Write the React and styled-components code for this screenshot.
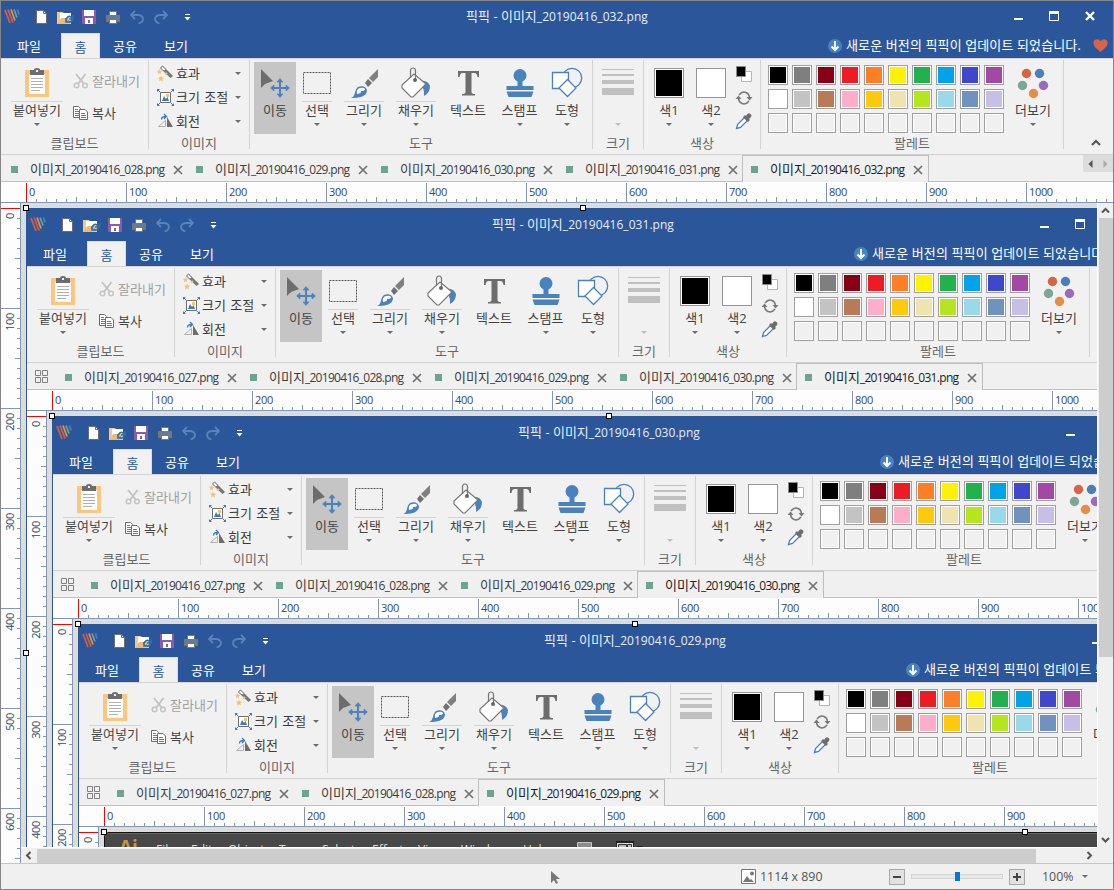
import React from 'react';
import styled, { createGlobalStyle } from 'styled-components';

const UI = `'Open Sans', 'Noto Sans CJK KR', sans-serif`;
const LINE = '#8497b0';

const Global = createGlobalStyle`
  * { box-sizing: border-box; }
  body { margin: 0; background: #f0f0f0; overflow: hidden; }
`;

const Frame = styled.div`
  width: 1114px;
  height: 890px;
  flex: none;
  display: flex;
  flex-direction: column;
  overflow: hidden;
  background: #f1f1f1;
  border: 1px solid ${(p) => (p.$root ? '#858585' : '#2b579a')};
  font: 13px/18px ${UI};
  color: #3b3b3b;
  white-space: nowrap;
`;

const TitleBar = styled.header`
  height: 32px;
  flex: none;
  display: flex;
  background: #2b579a;
`;
const QuickTools = styled.div`
  width: 300px;
  height: 32px;
  svg { display: block; }
`;
const Title = styled.div`
  flex: 1;
  text-align: center;
  line-height: 31px;
  color: #e8edf5;
`;
const Latin = styled.span`
  font-size: 12px;
  letter-spacing: ${(p) => p.$spacing || '0'};
`;
const WindowButtons = styled.div`
  width: 300px;
  display: flex;
  justify-content: flex-end;
`;

const MenuBar = styled.nav`
  height: 25px;
  flex: none;
  display: flex;
  padding-left: 2px;
  background: #2b579a;
`;
const MenuItem = styled.div`
  width: ${(p) => p.$w}px;
  margin-right: ${(p) => p.$gap || 0}px;
  text-align: center;
  line-height: 26px;
  color: ${(p) => (p.$active ? '#2b579a' : '#fff')};
  background: ${(p) => (p.$active ? '#f1f1f1' : 'transparent')};
  border: ${(p) => (p.$active ? '1px solid #dcdcdc' : '0')};
  border-bottom: 0;
`;
const Notice = styled.div`
  flex: 1;
  display: flex;
  align-items: center;
  justify-content: flex-end;
  padding-right: 5px;
  line-height: 20px;
  color: #fff;
  span { width: 235px; margin: 0 12px 2px 4px; letter-spacing: 0.12px; }
`;

const Ribbon = styled.div`
  height: 97px;
  flex: none;
  display: flex;
  padding-top: 1px;
  border-top: 1px solid #d4d4d4;
  border-bottom: 1px solid #d0d0d0;
`;
const Group = styled.section`
  width: ${(p) => p.$w}px;
  height: 89px;
  flex: none;
  display: flex;
  flex-direction: column;
  border-right: 1px solid #d2d2d2;
`;
const GroupBody = styled.div`
  height: 74px;
  flex: none;
  display: flex;
  padding-left: ${(p) => p.$pad || 0}px;
`;
const GroupLabel = styled.div`
  text-align: center;
  line-height: 19px;
  color: #666;
`;
const BigButton = styled.div`
  width: ${(p) => p.$w}px;
  height: 72px;
  flex: none;
  margin: 2px ${(p) => p.$gap || 0}px 0 0;
  display: flex;
  flex-direction: column;
  align-items: center;
  background: ${(p) => (p.$active ? '#c5c5c5' : 'transparent')};
  color: #444;
  > svg { flex: none; display: block; }
`;
const Caption = styled.div`
  width: ${(p) => p.$line || 0}px;
  height: 20px;
  line-height: 17px;
  display: flex;
  justify-content: center;
  border-top: 1px solid ${(p) => (p.$line ? '#d4d4d4' : 'transparent')};
`;
const Arrow = styled.i`
  width: 0;
  height: 0;
  margin-top: ${(p) => p.$top || 0}px;
  border: 3px solid transparent;
  border-top-color: ${(p) => p.$color || '#6d6d6d'};
  border-bottom: 0;
`;
const SideButtons = styled.div`
  display: flex;
  flex-direction: column;
  padding: 5px 0 0 10px;
`;
const SideButton = styled.div`
  height: 32px;
  display: flex;
  align-items: center;
  gap: 3px;
  color: ${(p) => (p.$off ? '#a0a0a0' : '#444')};
`;
const RowList = styled.div`
  flex: 1;
  padding-top: 1px;
`;
const RowButton = styled.div`
  height: 24px;
  display: flex;
  align-items: center;
  padding: 0 8px;
  svg { margin-right: 2px; }
  span { flex: 1; word-spacing: 1px; }
`;
const Stripes = styled.div`
  width: 32px;
  height: 39px;
  padding-top: 7px;
  div { background: #c0c0c0; margin-bottom: 4px; }
`;
const Chip = styled.div`
  width: 30px;
  height: 30px;
  margin: 6px 0 3px;
  border: 1px solid #969696;
  outline: 1px solid #fff;
  outline-offset: -2px;
  background: ${(p) => p.$color};
`;
const Palette = styled.div`
  width: 236px;
  height: 68px;
  display: grid;
  grid-template-columns: repeat(10, 20px);
  grid-auto-rows: 20px;
  gap: 4px;
  margin-top: 5px;
`;
const Swatch = styled.div`
  border: 1px solid #a0a0a0;
  background-color: ${(p) => p.$color};
  box-shadow: inset 0 0 0 1px #fff;
`;
const RibbonEnd = styled.div`
  flex: 1;
  display: flex;
  align-items: flex-end;
  justify-content: flex-end;
  padding: 0 12px 7px 0;
`;

const DocTabs = styled.div`
  height: 27px;
  flex: none;
  display: flex;
  padding-left: 1px;
  background: linear-gradient(#c0c0c0, #c0c0c0) bottom / 100% 1px no-repeat #f0f0f0;
`;
const GridButton = styled.div`
  width: 28px;
  padding: 7px 0 0 7px;
  svg { display: block; }
`;
const DocTab = styled.div`
  width: ${(p) => (p.$active ? 187 : 185)}px;
  flex: none;
  display: flex;
  align-items: center;
  color: ${(p) => (p.$active ? '#1c1c1c' : '#3c3c3c')};
  background: ${(p) => (p.$active ? '#f0f0f0' : 'transparent')};
  border: solid #bdbdbd;
  border-width: ${(p) => (p.$active ? '1px 1px 0 1px' : '0')};
  padding: ${(p) => (p.$active ? '1px 0 0 8px' : '2px 0 0 9px')};
`;
const DocName = styled.span`
  width: 136px;
  margin: 0 7px 0 12px;
`;
const Square = styled.i`
  width: 7px;
  height: 7px;
  flex: none;
  background: #69a592;
`;
const TabScroll = styled.div`
  width: 30px;
  height: 17px;
  margin-left: auto;
  background: #dcdcdc;
  display: flex;
  align-items: center;
  justify-content: space-around;
`;

const RulerTop = styled.div`
  height: 21px;
  flex: none;
  display: flex;
  padding: 1px 0 0 25px;
  border-bottom: 1px solid ${LINE};
  background: #fdfdfd;
  overflow: hidden;
`;
const TopMark = styled.div`
  width: 100px;
  flex: none;
  border-left: 1px solid ${(p) => (p.$zero ? '#f00' : LINE)};
  padding-left: 2px;
  font-size: 11px;
  line-height: 18px;
  letter-spacing: -0.35px;
  color: #2f4a6b;
  background:
    linear-gradient(${LINE}, ${LINE}) 49px 100% / 1px 5px no-repeat,
    repeating-linear-gradient(90deg, transparent 0 9px, ${LINE} 9px 10px) 0 100% / 99px 3px no-repeat;
`;
const Middle = styled.div`
  flex: 1;
  min-height: 0;
  display: flex;
`;
const RulerLeft = styled.div`
  width: 20px;
  flex: none;
  padding-top: 5px;
  border-right: 1px solid ${LINE};
  background: #fdfdfd;
  overflow: hidden;
`;
const LeftMark = styled.div`
  height: 100px;
  display: flex;
  align-items: flex-start;
  border-top: 1px solid ${(p) => (p.$zero ? '#f00' : LINE)};
  background:
    linear-gradient(${LINE}, ${LINE}) 100% 49px / 5px 1px no-repeat,
    repeating-linear-gradient(180deg, transparent 0 9px, ${LINE} 9px 10px) 100% 0 / 3px 99px no-repeat;
  span {
    writing-mode: vertical-rl;
    transform: rotate(180deg);
    font-size: 11px;
    line-height: 16px;
    letter-spacing: -0.35px;
    color: #2f4a6b;
    margin: 4px 0 0 1px;
  }
`;
const Canvas = styled.div`
  flex: 1;
  min-width: 0;
  display: grid;
  grid-template-columns: 1fr 16px;
  grid-template-rows: 1fr 16px;
`;
const Viewport = styled.div`
  position: relative;
  overflow: hidden;
  background: #dcdcdc;
  padding: 5px 0 0 5px;
`;
const Handle = styled.i`
  position: absolute;
  left: ${(p) => p.$x + 3}px;
  top: ${(p) => p.$y + 3}px;
  width: 6px;
  height: 6px;
  border: 1px solid #000;
  background: #fff;
`;
const VScroll = styled.div`
  display: flex;
  flex-direction: column;
  align-items: center;
  justify-content: space-between;
  border-left: 1px solid #fff;
  background: #f0f0f0;
  svg { flex: none; display: block; }
`;
const HScroll = styled.div`
  display: flex;
  align-items: center;
  border-top: 1px solid #fff;
  background: #f0f0f0;
  svg { flex: none; display: block; }
`;
const Track = styled.div`
  flex: 1;
  padding-left: ${(p) => p.$pad || 0}px;
`;
const Thumb = styled.div`
  background: #cdcdcd;
  width: ${(p) => p.$w}px;
  height: ${(p) => p.$h}px;
`;
const Corner = styled.div`
  background: #f0f0f0;
`;

const Status = styled.footer`
  height: 26px;
  flex: none;
  display: flex;
  align-items: center;
  border-top: 1px solid #c6c6c6;
  background: #f0f0f0;
  color: #555;
  font-size: 12.4px;
  > svg { flex: none; }
`;
const StatusText = styled.div`
  width: ${(p) => p.$w}px;
  flex: none;
  padding-left: ${(p) => p.$pad}px;
`;
const ZoomButton = styled.div`
  width: 16px;
  height: 16px;
  flex: none;
  border: 1px solid #a8a8a8;
  background: #e2e2e2;
  display: flex;
  align-items: center;
  justify-content: center;
`;
const Slider = styled.div`
  width: 92px;
  height: 5px;
  margin: 0 6px;
  flex: none;
  border: 1px solid #d4d4d4;
  background: #e5e9e9;
  display: flex;
  align-items: center;
  justify-content: center;
  i { width: 5px; height: 9px; background: #0078d7; flex: none; }
`;

const AppBar = styled.div`
  width: 1840px;
  height: 200px;
  display: flex;
  align-items: flex-start;
  padding-left: 14px;
  border: 1px solid #111;
  border-radius: 5px 0 0 0;
  box-shadow: inset 0 1px 0 #666;
  background: #484848;
  color: #ddd;
  font: 12px/17px ${UI};
  white-space: nowrap;
  > svg { flex: none; margin-top: 8px; }
`;
const AppLogo = styled.b`
  width: 17px;
  margin: 1px 20px 0 0;
  font: bold 19px/26px ${UI};
  color: #c9953f;
`;
const AppMenu = styled.span`
  width: ${(p) => p.$w}px;
  flex: none;
  margin-top: 8px;
`;

const CloseX = () => (
  <svg width="10" height="10" viewBox="0 0 10 10"><path d="M1 1l8 8M9 1L1 9" stroke="#707070" strokeWidth="1.7" /></svg>
);

const QuickIcons = () => (
  <svg width="200" height="32" viewBox="1 1 200 32" fill="none">
    <g strokeWidth="1.7">
      <path d="M5 10l5 13" stroke="#d65f43" />
      <path d="M8 9.500l5 13" stroke="#d65f43" />
      <path d="M11 9.500l4 11" stroke="#e8924a" />
      <path d="M14 9.500l3 8" stroke="#6fa596" />
      <path d="M17.500 9.500l1.500 5" stroke="#4a82bd" />
    </g>
    <path d="M36.500 10.500h7l3 3v10h-10z" fill="#fff" stroke="#6d6d6d" />
    <path d="M43.500 10.500v3h3" stroke="#6d6d6d" />
    <path d="M57 12h6l1 2h7v10H57z" fill="#f5c886" />
    <path d="M60 13h11v6H60z" fill="#fff" />
    <path d="M57.500 24l4-6h10l-4 6z" fill="#eebb74" />
    <path d="M66.500 18.500q2.500-4 5.500-.5M73 15v4h-4M66 18v4h4M72.500 20q-2 3.500-5 1" stroke="#2f6db0" strokeWidth="1.700" />
    <path d="M82 10h14v14H82z" fill="#8d5bab" />
    <path d="M84 10h10v6H84zM85 18h8v6h-8z" fill="#fff" />
    <path d="M88 20h2v3h-2z" fill="#8d5bab" />
    <path d="M106 15h14v7h-14z" fill="#777" />
    <path d="M109.500 11.500h7v4h-7z" fill="#fff" stroke="#777" />
    <path d="M109 15h8v2h-8z" fill="#4a82bd" />
    <path d="M109.500 19.500h7v4h-7z" fill="#fff" stroke="#777" />
    <g stroke="#5b82bb" strokeWidth="1.800">
      <path d="M135 11l-4 4 4 4M131.500 15h6q5 0 5.500 4 0 3-4.500 4.500" />
      <path d="M163 11l4 4-4 4M166.500 15h-6q-5 0-5.500 4 0 3 4.500 4.500" />
    </g>
    <path d="M185 14.500h5" stroke="#fff" />
    <path d="M184.500 17h6l-3 3.500z" fill="#fff" />
  </svg>
);

const WindowIcons = () => (
  <svg width="113" height="32" viewBox="1000 1 113 32" fill="none" stroke="#fff">
    <path d="M1014 19h9" strokeWidth="2" />
    <path d="M1049.500 12.500h9v8h-9z" />
    <path d="M1049 12.500h10" strokeWidth="3" />
    <path d="M1086 12l8 8M1094 12l-8 8" strokeWidth="2.400" />
  </svg>
);

const PasteIcon = () => (
  <svg width="26" height="39" viewBox="24 62 26 39">
    <path d="M25 70h24v27H25z" fill="#fcc77d" />
    <path d="M29 74h16v20H29z" fill="#fff" />
    <path d="M30 70h4q0-2 3-2t3 2h4v5H30z" fill="#6d6d6d" />
    <path d="M36 70h2v2h-2z" fill="#f1f1f1" />
    <path d="M31 78.500h12M31 81.500h12M31 84.500h12M31 87.500h12M31 90.500h9" stroke="#b0b0b0" />
  </svg>
);
const CutIcon = () => (
  <svg width="16" height="16" viewBox="0 0 16 16" fill="none" stroke="#c4c4c4">
    <path d="M3 1l8 10M12.500 1L5 11" strokeWidth="2" />
    <circle cx="3.500" cy="12.500" r="2.300" strokeWidth="1.500" /><circle cx="12" cy="12.500" r="2.300" strokeWidth="1.500" />
  </svg>
);
const CopyIcon = () => (
  <svg width="16" height="16" viewBox="0 0 16 16" fill="#fff" stroke="#6d6d6d">
    <path d="M.5 1.500h5l2 2v9h-7z" /><path d="M2 4.500h3M2 6.500h4M2 8.500h4M2 10.500h4" stroke="#4a82bd" />
    <path d="M6.500 4.500h5.500l2.500 2.500v7.500h-8z" /><path d="M8 8.500h4M8 10.500h5M8 12.500h5" stroke="#4a82bd" />
  </svg>
);
const EffectIcon = () => (
  <svg width="17" height="17" viewBox="0 0 17 17">
    <path d="M3 3l2.500-2.500L16 11l-2.500 2z" fill="#777" /><path d="M3.500 3l2-1.700L9 4.500 7 6z" fill="#fff" stroke="#777" strokeWidth=".8" />
    <path d="M2.500 4l.8 1.800 2 .2-1.500 1.300.4 1.900-1.700-1-1.700 1 .4-1.900L0 6l1.700-.2zM9 6.500l.6 1.500 1.400.1-1.100 1 .3 1.400-1.200-.8-1.200.8.3-1.400-1.100-1 1.500-.1zM4 10.500l.9 2 2.300.2-1.700 1.500.5 2.200-2-1.100-2 1.100.5-2.200-1.700-1.500 2.300-.2z" fill="#f0c375" />
  </svg>
);
const ResizeIcon = () => (
  <svg width="17" height="17" viewBox="0 0 17 17" fill="none">
    <path d="M3.500 3.500h10v10h-10z" fill="#fff" stroke="#6d6d6d" />
    <path d="M5 12l2-5 2 3 1.500-2 1.500 4z" fill="#3d7bbd" /><path d="M9 5h3v3H9z" fill="#f0c375" />
    <path d="M0 0h3L0 3zM17 0h-3l3 3zM0 17h3l-3-3zM17 17h-3l3-3z" fill="#3d7bbd" />
    <path d="M1 1l2 2M16 1l-2 2M1 16l2-2M16 16l-2-2" stroke="#3d7bbd" />
  </svg>
);
const RotateIcon = () => (
  <svg width="17" height="17" viewBox="0 0 17 17" fill="none">
    <path d="M1.500 13.500h7V7.500z" stroke="#b0b0b0" /><path d="M10 4v10h6z" fill="#6d6d6d" />
    <path d="M4.500 6.500q0-3 4-3M7 1l2.500 2.500L7 6" stroke="#3d7bbd" strokeWidth="1.300" />
  </svg>
);
const MoveIcon = () => (
  <svg width="42" height="39" viewBox="254 62 42 39" fill="none">
    <path d="M261 69v19l4-4 8-3z" fill="#6d6d6d" />
    <path d="M272 88h16M280 80v16" stroke="#4a82bd" strokeWidth="2" />
    <path d="M277 82l3-3.500 3 3.500zM277 94l3 3.500 3-3.500zM274 85l-3.500 3 3.500 3zM286 85l3.500 3-3.500 3z" fill="#4a82bd" stroke="#4a82bd" strokeWidth=".6" />
  </svg>
);
const SelectIcon = () => (
  <svg width="30" height="39" viewBox="302 62 30 39">
    <path d="M303.500 72.500h27v21h-27z" fill="none" stroke="#555" strokeDasharray="2 1" />
  </svg>
);
const DrawIcon = () => (
  <svg width="40" height="39" viewBox="344 62 40 39">
    <path d="M378 69v8l-5 5-4-4z" fill="#808080" /><path d="M368 79l4 4-4 4-3-4z" fill="#707070" />
    <path d="M351 98c5-1 3-8 7-11 4-2 9 0 9 4-1 6-8 7-16 7z" fill="#4a82bd" />
    <path d="M360 88q-4 1-3 6 5-1 4-3 4 0 4-2-1-2-5-1z" fill="#fff" />
  </svg>
);
const FillIcon = () => (
  <svg width="40" height="39" viewBox="396 62 40 39" fill="none">
    <path d="M419 81q9-1 11 5 0 7-6 10 1-7-5-15z" fill="#4a82bd" />
    <path d="M414 74l12 10-13 13h-2l-9-9v-3z" fill="#fff" stroke="#777" strokeWidth="1.200" />
    <path d="M410.500 78v-7q0-3 2.500-3t2.500 3v9" stroke="#777" strokeWidth="1.200" /><circle cx="415" cy="80" r="2" fill="#666" />
  </svg>
);
const LetterIcon = () => (
  <svg width="40" height="39" viewBox="448 62 40 39">
    <path d="M458 71h21v6h-1.500q-.5-4-3-4h-3v19q0 2 3.500 2v1.500h-13V94q3.500 0 3.500-2V73h-3q-2.500 0-3 4H458z" fill="#6d6d6d" />
  </svg>
);
const StampIcon = () => (
  <svg width="40" height="39" viewBox="499.500 62 40 39" fill="#4a82bd">
    <circle cx="519.500" cy="75.500" r="6.500" /><path d="M517 80h5v6h11v4h-27v-4h11zM506 91.500h27l-2 5.500h-23z" />
  </svg>
);
const ShapeIcon = () => (
  <svg width="40" height="39" viewBox="547 62 40 39" fill="#fff" stroke="#4a82bd" strokeWidth="1.300">
    <circle cx="572" cy="78" r="9.700" fill="#f1f1f1" /><path d="M552.500 72.500h16v16h-16z" /><path d="M567.500 79.500l8.500 8.500-8.500 8.500-8.500-8.500z" />
  </svg>
);
const ColorTools = () => (
  <svg width="20" height="72" viewBox="734 62 20 72" fill="none">
    <path d="M741.500 71.500h10v10h-10z" fill="#fff" stroke="#b5b5b5" /><path d="M736.500 66.500h9v10h-9z" fill="#000" stroke="#8a8a8a" />
    <path d="M739 95q3-4 7-2.500 3 1 3.500 5M749 101q-3 4-7 2.500-3-1-3.500-5" stroke="#777" strokeWidth="1.500" />
    <path d="M746.500 97h6l-3 3.500zM735.500 99h6l-3-3.500z" fill="#777" />
    <path d="M736.500 128.500l1-4 7-7 3 3-7 7z" fill="#fff" stroke="#4a82bd" strokeWidth="1.300" />
    <path d="M743 117l2-2 1 1q2-4 4.500-2t-1.500 5l1 1-2 2z" fill="#6d6d6d" />
  </svg>
);
const MoreIcon = () => (
  <svg width="34" height="39" viewBox="1016 62 34 39">
    <circle cx="1026.500" cy="73.500" r="4.700" fill="#d86345" /><circle cx="1039.500" cy="73.500" r="4.700" fill="#4a7fba" />
    <circle cx="1022.500" cy="85.500" r="4.700" fill="#7aa798" /><circle cx="1043.500" cy="85.500" r="4.700" fill="#9a6abb" />
    <circle cx="1033.500" cy="93.500" r="4.700" fill="#e68d46" />
  </svg>
);
const Chevron = ({ d }) => (
  <svg width="15" height="15" viewBox="0 0 15 15" fill="none" stroke="#555" strokeWidth="2"><path d={d} /></svg>
);

const COLORS = [
  '#000', '#7f7f7f', '#880015', '#ed1c24', '#ff7f27', '#fff200', '#22b14c', '#00a2e8', '#3f48cc', '#a349a4',
  '#fff', '#c3c3c3', '#b97a57', '#ffaec9', '#ffc90e', '#efe4b0', '#b5e61d', '#99d9ea', '#7092be', '#c8bfe7',
  ...Array(10).fill('#f0f0f0'),
];

const Tool = ({ w, gap, label, line, arrow = true, active, icon, arrowColor }) => (
  <BigButton $w={w} $gap={gap} $active={active}>
    {icon}
    <Caption $line={line}>{label}</Caption>
    {arrow && <Arrow $top={2} $color={arrowColor} />}
  </BigButton>
);

const FileName = ({ n, spacing }) => <>이미지<Latin $spacing={spacing}>_20190416_{n}.png</Latin></>;

const RibbonBar = () => (
  <Ribbon>
    <Group $w={148}>
      <GroupBody $pad={10}>
        <Tool w={52} label="붙여넣기" line={52} icon={<PasteIcon />} />
        <SideButtons>
          <SideButton $off><CutIcon />잘라내기</SideButton>
          <SideButton><CopyIcon />복사</SideButton>
        </SideButtons>
      </GroupBody>
      <GroupLabel>클립보드</GroupLabel>
    </Group>
    <Group $w={101}>
      <GroupBody>
        <RowList>
          <RowButton><EffectIcon /><span>효과</span><Arrow /></RowButton>
          <RowButton><ResizeIcon /><span>크기 조절</span><Arrow /></RowButton>
          <RowButton><RotateIcon /><span>회전</span><Arrow /></RowButton>
        </RowList>
      </GroupBody>
      <GroupLabel>이미지</GroupLabel>
    </Group>
    <Group $w={343}>
      <GroupBody $pad={4}>
        <Tool w={42} gap={2} label="이동" active arrow={false} icon={<MoveIcon />} />
        <Tool w={38} label="선택" line={30} icon={<SelectIcon />} />
        <Tool w={56} label="그리기" line={40} icon={<DrawIcon />} />
        <Tool w={48} label="채우기" line={40} icon={<FillIcon />} />
        <Tool w={56} label="텍스트" arrow={false} icon={<LetterIcon />} />
        <Tool w={47} label="스탬프" icon={<StampIcon />} />
        <Tool w={48} label="도형" icon={<ShapeIcon />} />
      </GroupBody>
      <GroupLabel>도구</GroupLabel>
    </Group>
    <Group $w={51}>
      <GroupBody>
        <Tool w={50} label="" arrowColor="#c0c0c0" icon={
          <Stripes>{[1, 2, 4, 7].map((h) => <div key={h} style={{ height: h }} />)}</Stripes>
        } />
      </GroupBody>
      <GroupLabel>크기</GroupLabel>
    </Group>
    <Group $w={117}>
      <GroupBody $pad={4}>
        <Tool w={42} label="색1" icon={<Chip $color="#000" />} />
        <Tool w={42} label="색2" icon={<Chip $color="#fff" />} />
        <BigButton $w={24}><ColorTools /></BigButton>
      </GroupBody>
      <GroupLabel>색상</GroupLabel>
    </Group>
    <Group $w={303}>
      <GroupBody $pad={7}>
        <Palette>{COLORS.map((c, i) => <Swatch key={i} $color={c} />)}</Palette>
        <Tool w={58} label="더보기" icon={<MoreIcon />} />
      </GroupBody>
      <GroupLabel>팔레트</GroupLabel>
    </Group>
    <RibbonEnd>
      <svg width="10" height="8" viewBox="0 0 10 8" fill="none" stroke="#555" strokeWidth="2"><path d="M1 6l4-4 4 4" /></svg>
    </RibbonEnd>
  </Ribbon>
);

const APP_MENUS = [
  ['File', 35], ['Edit', 37], ['Object', 51], ['Type', 43], ['Select', 50],
  ['Effect', 46], ['View', 43], ['Window', 62], ['Help', 54],
];

const Illustrator = () => (
  <AppBar>
    <AppLogo>Ai</AppLogo>
    {APP_MENUS.map(([t, w]) => <AppMenu key={t} $w={w}>{t}</AppMenu>)}
    <svg width="70" height="20" viewBox="0 0 70 20">
      <path d="M.5 1.500h14v14H.5z" fill="#8c8c8c" stroke="#c4c4c4" />
      <path d="M39 0h18v16H39z" fill="#222" /><path d="M40 2h16v13H40z" fill="#ddd" />
      <path d="M41.500 3.500h8v10h-8zM50.500 3.500h4v10h-4z" fill="#bbb" stroke="#333" />
      <path d="M60 5h6v1h-6z" fill="#222" />
    </svg>
  </AppBar>
);

const DOCS = [
  { title: '032', tabs: ['028', '029', '030', '031', '032'] },
  { title: '031', tabs: ['027', '028', '029', '030', '031'] },
  { title: '030', tabs: ['027', '028', '029', '030'] },
  { title: '029', tabs: ['027', '028', '029'] },
];
const MARKS = [0, 100, 200, 300, 400, 500, 600, 700, 800, 900, 1000];

const EditorWindow = ({ level }) => {
  const { title, tabs } = DOCS[level];
  const root = level === 0;
  const last = level === DOCS.length - 1;
  return (
    <Frame $root={root}>
      <TitleBar>
        <QuickTools><QuickIcons /></QuickTools>
        <Title>픽픽 - <FileName n={title} spacing="0.04px" /></Title>
        <WindowButtons><WindowIcons /></WindowButtons>
      </TitleBar>
      <MenuBar>
        <MenuItem $w={52} $gap={6}>파일</MenuItem>
        <MenuItem $w={39} $active>홈</MenuItem>
        <MenuItem $w={50}>공유</MenuItem>
        <MenuItem $w={52}>보기</MenuItem>
        <Notice>
          <svg width="14" height="14" viewBox="0 0 14 14"><circle cx="7" cy="7" r="7" fill="#4a82bd" /><path d="M7 2v9M3.500 7.500L7 11l3.500-3.500" stroke="#fff" strokeWidth="2" fill="none" /></svg>
          <span>새로운 버전의 픽픽이 업데이트 되었습니다.</span>
          <svg width="15" height="15" viewBox="0 0 16 15"><path d="M8 14.500L2 9Q-1 5 1.500 2 5-1 8 3q3-4 6.500-1 2.500 3-.5 7z" fill="#d86345" /></svg>
        </Notice>
      </MenuBar>
      <RibbonBar />
      <DocTabs>
        {!root && (
          <GridButton>
            <svg width="13" height="13" viewBox="0 0 13 13" fill="none" stroke="#808080"><path d="M.5.5h5v5h-5zM7.500.5h5v5h-5zM.5 7.500h5v5h-5zM7.500 7.500h5v5h-5z" /></svg>
          </GridButton>
        )}
        {tabs.map((n) => (
          <DocTab key={n} $active={n === title}>
            <Square />
            <DocName><FileName n={n} spacing="-0.7px" /></DocName>
            <CloseX />
          </DocTab>
        ))}
        {root && (
          <TabScroll>
            <svg width="5" height="8"><path d="M4.500 0v8L.5 4z" fill="#555" /></svg>
            <svg width="5" height="8"><path d="M.5 0v8l4-4z" fill="#aaa" /></svg>
          </TabScroll>
        )}
      </DocTabs>
      <RulerTop>{MARKS.map((m) => <TopMark key={m} $zero={m === 0}>{m}</TopMark>)}</RulerTop>
      <Middle>
        <RulerLeft>{MARKS.slice(0, 7).map((m) => <LeftMark key={m} $zero={m === 0}><span>{m}</span></LeftMark>)}</RulerLeft>
        <Canvas>
          <Viewport>
            {last ? <Illustrator /> : <EditorWindow level={level + 1} />}
            <Handle $x={-1} $y={-1} />
            <Handle $x={last ? 920 : 556} $y={-1} />
            <Handle $x={-1} $y={444} />
          </Viewport>
          <VScroll>
            <Chevron d="M4 9.500l3.500-3.500 3.500 3.500" />
            <Track $pad={0}><Thumb $w={14} $h={439} /></Track>
            <Chevron d="M4 6l3.500 3.500L11 6" />
          </VScroll>
          <HScroll>
            <Chevron d="M9.500 4L6 7.500 9.500 11" />
            <Track $pad={1}><Thumb $w={999} $h={14} /></Track>
            <Chevron d="M5.500 4L9 7.500 5.500 11" />
          </HScroll>
          <Corner />
        </Canvas>
      </Middle>
      <Status>
        <svg width="740" height="20" viewBox="1 866 740 20"><path d="M551 870v12l3-3 2 4 2-1-2-4h4z" fill="#777" /></svg>
        <svg width="15" height="15" viewBox="0 0 15 15"><path d="M.5.500h14v14H.5z" fill="#fff" stroke="#777" /><path d="M2 13l4-6 3 4 1-1 3 3z" fill="#777" /><circle cx="11" cy="4.500" r="2" fill="#777" /></svg>
        <StatusText $w={133} $pad={4}>1114 x 890</StatusText>
        <ZoomButton><svg width="8" height="8"><path d="M0 4h8" stroke="#444" strokeWidth="2" /></svg></ZoomButton>
        <Slider><i /></Slider>
        <ZoomButton><svg width="8" height="8"><path d="M0 4h8M4 0v8" stroke="#444" strokeWidth="2" /></svg></ZoomButton>
        <StatusText $w={57} $pad={17}>100%</StatusText>
        <Arrow />
      </Status>
    </Frame>
  );
};

export default function App() {
  return (
    <>
      <Global />
      <EditorWindow level={0} />
    </>
  );
}
